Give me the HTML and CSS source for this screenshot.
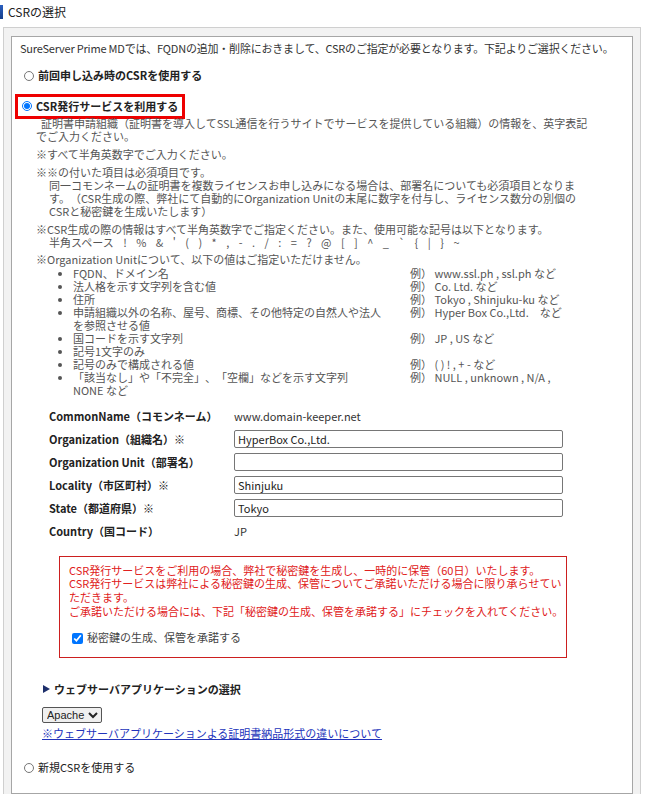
FILE: index.html
```html
<!DOCTYPE html>
<html lang="ja">
  <head>
    <meta charset="utf-8">
    <meta name="viewport" content="width=device-width, initial-scale=1">
    <title>CSRの選択</title>
    <link rel="stylesheet" href="styles.css">
  </head>

  <body>
    <h2 class="secTitle">CSRの選択</h2>

    <div class="csrOuter">
      <div class="csrInner">
        <p class="csrIntro">SureServer Prime MDでは、FQDNの追加・削除におきまして、CSRのご指定が必要となります。下記よりご選択ください。</p>

        <div class="csrOpt">
          <label><input type="radio" name="csrType" value="prev"> 前回申し込み時のCSRを使用する</label>
        </div>

        <div class="csrOpt csrOpt-sel">
          <label class="csrOpt-active"><input type="radio" name="csrType" value="service" checked> CSR発行サービスを利用する</label>
        </div>

        <div class="csrService">
          <p class="note note-lead">証明書申請組織（証明書を導入してSSL通信を行うサイトでサービスを提供している組織）の情報を、英字表記でご入力ください。</p>
          <p class="note">※すべて半角英数字でご入力ください。</p>
          <p class="note">※※の付いた項目は必須項目です。</p>
          <p class="note note-sub">同一コモンネームの証明書を複数ライセンスお申し込みになる場合は、部署名についても必須項目となります。（CSR生成の際、弊社にて自動的にOrganization Unitの末尾に数字を付与し、ライセンス数分の別個のCSRと秘密鍵を生成いたします）</p>
          <p class="note">※CSR生成の際の情報はすべて半角英数字でご指定ください。また、使用可能な記号は以下となります。</p>
          <p class="note note-sub note-symbols">半角スペース ! % &amp; ' ( ) * , - . / : = ? @ [ ] ^ _ ` { | } ~</p>
          <p class="note note-list">※Organization Unitについて、以下の値はご指定いただけません。</p>
          <ul class="ouList">
            <li><span class="ouItem">FQDN、ドメイン名</span>例）&nbsp;www.ssl.ph , ssl.ph など</li>
            <li><span class="ouItem">法人格を示す文字列を含む値</span>例）&nbsp;Co. Ltd. など</li>
            <li><span class="ouItem">住所</span>例）&nbsp;Tokyo , Shinjuku-ku など</li>
            <li><span class="ouItem">申請組織以外の名称、屋号、商標、その他特定の自然人や法人を参照させる値</span>例）&nbsp;Hyper Box Co.,Ltd.　など</li>
            <li><span class="ouItem">国コードを示す文字列</span>例）&nbsp;JP , US など</li>
            <li><span class="ouItem">記号1文字のみ</span></li>
            <li><span class="ouItem">記号のみで構成される値</span>例）&nbsp;( ) ! , + - など</li>
            <li><span class="ouItem">「該当なし」や「不完全」、「空欄」などを示す文字列</span>例）&nbsp;NULL , unknown , N/A , NONE など</li>
          </ul>

          <table class="csrForm">
            <tr>
              <th>CommonName（コモンネーム）</th>
              <td>www.domain-keeper.net</td>
            </tr>
            <tr>
              <th>Organization（組織名）※</th>
              <td><input type="text" value="HyperBox Co.,Ltd."></td>
            </tr>
            <tr>
              <th>Organization Unit（部署名）</th>
              <td><input type="text" value=""></td>
            </tr>
            <tr>
              <th>Locality（市区町村）※</th>
              <td><input type="text" value="Shinjuku"></td>
            </tr>
            <tr>
              <th>State（都道府県）※</th>
              <td><input type="text" value="Tokyo"></td>
            </tr>
            <tr>
              <th>Country（国コード）</th>
              <td>JP</td>
            </tr>
          </table>

          <div class="keyNotice">
            <p>CSR発行サービスをご利用の場合、弊社で秘密鍵を生成し、一時的に保管（60日）いたします。<br>
              CSR発行サービスは弊社による秘密鍵の生成、保管についてご承諾いただける場合に限り承らせていただきます。<br>
              ご承諾いただける場合には、下記「秘密鍵の生成、保管を承諾する」にチェックを入れてください。</p>
            <label class="keyAgree"><input type="checkbox" checked> 秘密鍵の生成、保管を承諾する</label>
          </div>

          <div class="webApp">
            <h3 class="webApp-title">ウェブサーバアプリケーションの選択</h3>
            <select class="webApp-select">
              <option>Apache</option>
              <option>IIS</option>
              <option>Nginx</option>
              <option>その他</option>
            </select>
            <a class="webApp-link" href="#">※ウェブサーバアプリケーションよる証明書納品形式の違いについて</a>
          </div>
        </div>

        <div class="csrOpt csrOpt-last">
          <label><input type="radio" name="csrType" value="new"> 新規CSRを使用する</label>
        </div>
      </div>
    </div>
  </body>
</html>
```

FILE: styles.css
```css
body {
  margin: 0;
  font-family: "Noto Sans CJK JP", "Noto Sans", sans-serif;
  font-size: 11px;
  line-height: 13px;
  color: #333;
  background: #fff;
  text-spacing-trim: space-all;
}

p, ul, h2, h3 {
  margin: 0;
}

.secTitle {
  position: relative;
  margin: 5px 0 0;
  padding-left: 8px;
  font-size: 12px;
  line-height: 14px;
  font-weight: normal;
  color: #222;
}
.secTitle::before {
  content: "";
  position: absolute;
  left: 0;
  top: 0;
  width: 3px;
  height: 14px;
  background: linear-gradient(#2a5fc0, #173f8a);
}

.csrOuter {
  margin: 8px 4px 0 3px;
  padding: 8px 7px 0;
  background: #f2f2f2;
  border: 1px solid #cfcfcf;
  border-bottom: 0;
}

.csrInner {
  background: #fff;
  border: 1px solid #a6a6a6;
  padding: 5px 8px 17px;
}

.csrIntro {
  letter-spacing: -0.2px;
  white-space: nowrap;
}

.csrOpt {
  margin-top: 13px;
  font-weight: bold;
  color: #222;
  line-height: 15px;
}
.csrOpt label {
  display: inline-flex;
  align-items: center;
  gap: 4px;
}
.csrOpt input[type="radio"] {
  width: 10px;
  height: 10px;
  margin: 0 0 0 4px;
}
.csrOpt-sel {
  margin-top: 10px;
}
.csrOpt-active {
  margin-left: -5px;
  padding: 2px 4px 2px 0;
  border: 3px solid #ee0000;
}

.csrService {
  margin: -2px 32px 0 16px;
  color: #555;
}

.note {
  margin-top: 5px;
}
.note-lead {
  margin-top: 0;
  text-indent: 5px;
}
.note-sub {
  margin-top: 0;
  padding-left: 13px;
}
.note-symbols {
  word-spacing: 7px;
}
.note-list {
  margin-top: 4px;
}

.ouList {
  margin-top: 1px;
  padding-left: 37px;
  margin-right: 20px;
}
.ouList li::after {
  content: "";
  display: block;
  clear: both;
}
.ouItem {
  float: left;
  width: 318px;
  margin-right: 19px;
}

.csrForm {
  margin: 8px 0 0 13px;
  border-collapse: collapse;
}
.csrForm th {
  width: 185px;
  height: 23px;
  padding: 0;
  text-align: left;
  font-weight: bold;
  color: #222;
}
.csrForm td {
  padding: 0;
  color: #333;
}
.csrForm input {
  box-sizing: border-box;
  width: 329px;
  height: 18px;
  padding: 0 3px;
  border: 1px solid #767676;
  border-radius: 2px;
  font-family: inherit;
  font-size: 11px;
  color: #222;
}

.keyNotice {
  margin: 13px 25px 0 23px;
  padding: 7px 2px 11px 9px;
  border: 1px solid #cc1f1f;
  color: #e02020;
  line-height: 13.7px;
}
.keyAgree {
  display: inline-flex;
  align-items: center;
  gap: 4px;
  margin: 13px 0 0 3px;
  color: #444;
}
.keyAgree input {
  width: 11px;
  height: 11px;
  margin: 0;
}

.webApp {
  margin: 25px 0 0 6px;
}
.webApp-title {
  position: relative;
  padding-left: 12px;
  font-size: 11px;
  font-weight: bold;
  color: #222;
}
.webApp-title::before {
  content: "";
  position: absolute;
  left: 1px;
  top: 2px;
  border-left: 7px solid #1d2f6b;
  border-top: 4.5px solid transparent;
  border-bottom: 4.5px solid transparent;
}
.webApp-select {
  display: block;
  margin-top: 11px;
  height: 16px;
  padding: 0;
  font-family: "Liberation Sans", sans-serif;
  font-size: 11px;
  color: #222;
  border: 1px solid #555;
  border-radius: 2px;
}
.webApp-link {
  display: inline-block;
  margin-top: 4px;
  color: #2233bb;
}

.csrOpt-last {
  margin-top: 20px;
  font-weight: normal;
}
```
